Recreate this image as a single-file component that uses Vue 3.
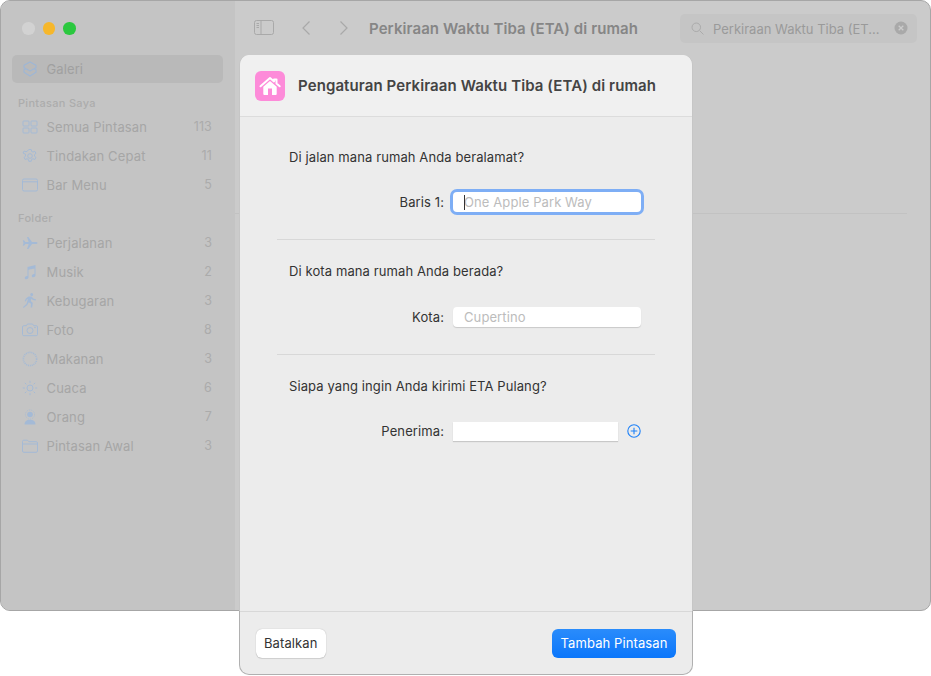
<script setup>
const mine = [
  { name: 'Semua Pintasan', count: 113, icon: 'grid' },
  { name: 'Tindakan Cepat', count: 11, icon: 'gear' },
  { name: 'Bar Menu', count: 5, icon: 'menu' },
]
const folders = [
  { name: 'Perjalanan', count: 3, icon: 'plane' },
  { name: 'Musik', count: 2, icon: 'music' },
  { name: 'Kebugaran', count: 3, icon: 'run' },
  { name: 'Foto', count: 8, icon: 'camera' },
  { name: 'Makanan', count: 3, icon: 'food' },
  { name: 'Cuaca', count: 6, icon: 'sun' },
  { name: 'Orang', count: 7, icon: 'person' },
  { name: 'Pintasan Awal', count: 3, icon: 'folder' },
]
const groups = [
  { title: 'Pintasan Saya', items: mine },
  { title: 'Folder', items: folders },
]
</script>

<template>
  <div class="stage">
    <div class="window">
      <aside class="sidebar">
        <div class="lights">
          <span class="light grey"></span>
          <span class="light amber"></span>
          <span class="light green"></span>
        </div>
        <div class="gallery">
          <svg class="ico" viewBox="0 0 16 16" fill="none" stroke="currentColor" stroke-width="1.100">
            <path d="M8 1 14 4.200v2.600L8 10 2 6.800V4.200Z" stroke-linejoin="round" />
            <path d="M3.500 7.700 2 9v2.300L8 15l6-3.700V9l-1.500-1.300" stroke-linejoin="round" />
          </svg>
          <span>Galeri</span>
        </div>
        <section v-for="g in groups" :key="g.title" class="group">
          <h3>{{ g.title }}</h3>
          <div v-for="it in g.items" :key="it.name" class="row">
            <svg class="ico" viewBox="0 0 16 16" fill="none" stroke="currentColor" stroke-width="1">
              <template v-if="it.icon === 'grid'">
                <rect x="1" y="2" width="6" height="5" rx=".8" /><rect x="9" y="2" width="6" height="5" rx=".8" />
                <rect x="1" y="9" width="6" height="5" rx=".8" /><rect x="9" y="9" width="6" height="5" rx=".8" />
              </template>
              <template v-else-if="it.icon === 'gear'">
                <circle cx="8" cy="8" r="2.300" />
                <path d="M6.800 1.500h2.400l.4 1.900 1.400.7 1.800-.8 1.200 2-1.500 1.300v1.600l1.500 1.300-1.200 2-1.800-.8-1.400.7-.4 1.900H6.800l-.4-1.900-1.400-.7-1.800.8-1.200-2 1.500-1.300V6.300L1 5l1.200-2 1.800.8 1.400-.7Z" stroke-linejoin="round" />
              </template>
              <template v-else-if="it.icon === 'menu'">
                <rect x=".5" y="2" width="15" height="12" rx="1.500" /><path d="M.5 4.800h15" />
              </template>
              <path v-else-if="it.icon === 'plane'" fill="currentColor" stroke="none" d="M15.500 8c0 .7-1 1-2 1H10l-3.600 5H5l1.700-5H3.400L2 10.700H.8L1.500 8 .8 5.300H2L3.400 7h3.300L5 2h1.400L10 7h3.500c1 0 2 .3 2 1Z" />
              <path v-else-if="it.icon === 'music'" fill="currentColor" stroke="none" d="M13.500 1v10.300c0 1.200-1 2-2.200 2-.9 0-1.500-.5-1.500-1.300 0-1 .8-1.600 2-1.900l.7-.2V4.600L6.500 5.800v7.500c0 1.200-1 2-2.200 2-.9 0-1.500-.5-1.500-1.300 0-1 .8-1.600 2-1.900l.7-.2V3Z" />
              <path v-else-if="it.icon === 'run'" fill="currentColor" stroke="none" d="M9.700 0a1.500 1.500 0 1 1 0 3 1.500 1.500 0 0 1 0-3ZM6.500 3.600l3-.2 2.200 2.400 2.300.4-.2 1.200-3-.5-1.300-1.300-.8 2.500 2.100 1.800-.6 4.600H8.700l.3-3.800-2.200-1.500-1.300 2.600-3.800 3.300-.7-1 3.400-3 1.600-5-1.300.5-.9 2-1.100-.5 1.200-2.700Z" />
              <template v-else-if="it.icon === 'camera'">
                <path d="M.5 5c0-.8.500-1.300 1.300-1.300h2.500L5.500 2h5l1.200 1.700h2.500c.8 0 1.300.5 1.300 1.300v7.500c0 .8-.5 1.200-1.300 1.200H1.800c-.8 0-1.300-.4-1.300-1.200Z" />
                <circle cx="8" cy="8.500" r="3" /><circle cx="13" cy="5.500" r=".4" />
              </template>
              <circle v-else-if="it.icon === 'food'" cx="8" cy="8" r="6.600" stroke-width="1.600" stroke-dasharray="1 .9" />
              <template v-else-if="it.icon === 'sun'">
                <circle cx="8" cy="8" r="3" />
                <path d="M8 .8v2M8 13.200v2M.8 8h2M13.200 8h2M2.900 2.900l1.400 1.400M11.700 11.700l1.400 1.400M13.100 2.900l-1.400 1.400M4.300 11.700l-1.400 1.400" />
              </template>
              <template v-else-if="it.icon === 'person'">
                <circle cx="8" cy="5.500" r="2.800" fill="currentColor" stroke="none" />
                <circle cx="8" cy="5.500" r="4.600" stroke-width=".8" stroke-dasharray="1 1" />
                <path fill="currentColor" stroke="none" d="M2.500 15.500c0-3 2-4.800 5.500-4.800s5.500 1.800 5.500 4.800Z" />
              </template>
              <path v-else d="M.5 3.500c0-.8.500-1.300 1.300-1.300h3.700l1.400 1.500h7.300c.8 0 1.300.5 1.300 1.300v8c0 .8-.5 1.300-1.300 1.300H1.800c-.8 0-1.300-.5-1.300-1.300ZM.5 6h15" stroke-linejoin="round" />
            </svg>
            <span class="label">{{ it.name }}</span>
            <span class="count">{{ it.count }}</span>
          </div>
        </section>
      </aside>
      <main class="main">
        <header class="toolbar">
          <svg class="panel-icon" viewBox="0 0 20 16" fill="none" stroke="currentColor" stroke-width="1">
            <rect x=".5" y=".5" width="19" height="14" rx="2" /><path d="M7 .5v14M2.500 3.500h2.500M2.500 5.500h2.500M2.500 7.500h2.500" />
          </svg>
          <svg class="chev" viewBox="0 0 10 16" fill="none" stroke="currentColor" stroke-width="1.200"><path d="M8.500 1.500 2 8l6.500 6.500" /></svg>
          <svg class="chev next" viewBox="0 0 10 16" fill="none" stroke="currentColor" stroke-width="1.200"><path d="M1.500 1.500 8 8l-6.500 6.500" /></svg>
          <h1>Perkiraan Waktu Tiba (ETA) di rumah</h1>
          <div class="search">
            <svg class="glass" viewBox="0 0 14 14" fill="none" stroke="currentColor" stroke-width="1"><circle cx="5.700" cy="5.700" r="4.600" /><path d="m9.200 9.200 4.200 4.200" /></svg>
            <span class="query">Perkiraan Waktu Tiba (ET...</span>
            <svg class="clear" viewBox="0 0 14 14"><circle cx="7" cy="7" r="6.500" fill="#a9a9a9" /><path d="m4.700 4.700 4.600 4.600m0-4.600-4.600 4.600" stroke="#cbcbcb" stroke-width="1.300" /></svg>
          </div>
        </header>
        <div class="content"><div class="rule"></div></div>
      </main>
    </div>

    <div class="dialog">
      <header class="dlg-head">
        <div class="app-icon">
          <svg viewBox="0 0 30 30" width="30" height="30">
            <path d="M5.500 15.300 15 7l4 3.400V8.500h2.500v4l3.200 2.800" fill="none" stroke="#fff" stroke-width="2" stroke-linecap="round" stroke-linejoin="round" />
            <path fill-rule="evenodd" fill="#fff" d="M8.300 15.800 15 10l6.700 5.800V23a1 1 0 0 1-1 1H9.300a1 1 0 0 1-1-1ZM13 17.500V24h4v-6.500Z" />
          </svg>
        </div>
        <h2>Pengaturan Perkiraan Waktu Tiba (ETA) di rumah</h2>
      </header>
      <div class="dlg-body">
        <section class="q first">
          <p>Di jalan mana rumah Anda beralamat?</p>
          <div class="field-row">
            <label>Baris 1:</label>
            <div class="input focus"><span class="caret"></span>One Apple Park Way</div>
          </div>
        </section>
        <section class="q second">
          <p>Di kota mana rumah Anda berada?</p>
          <div class="field-row">
            <label>Kota:</label>
            <div class="input">Cupertino</div>
          </div>
        </section>
        <section class="q last">
          <p>Siapa yang ingin Anda kirimi ETA Pulang?</p>
          <div class="field-row">
            <label>Penerima:</label>
            <div class="input square"></div>
            <svg class="plus" viewBox="0 0 14 14" fill="none" stroke="#1f82f8" stroke-width="1.100"><circle cx="7" cy="7" r="6.200" /><path d="M7 3.700v6.600M3.700 7h6.600" /></svg>
          </div>
        </section>
      </div>
      <footer class="dlg-foot">
        <button class="btn">Batalkan</button>
        <button class="btn primary">Tambah Pintasan</button>
      </footer>
    </div>
  </div>
</template>

<style scoped>
.stage {
  position: relative;
  width: 931px;
  height: 676px;
  overflow: hidden;
  background: #fff;
  font-family: Inter, "Liberation Sans", sans-serif;
  font-size: 13px;
  letter-spacing: 0.1px;
  color: #333;
}
.window {
  display: flex;
  height: 611px;
  box-sizing: border-box;
  border: 1px solid #a6a6a6;
  border-radius: 10px;
  overflow: hidden;
  background: #cbcbcb;
}
.sidebar {
  width: 234px;
  flex: none;
  box-sizing: border-box;
  padding: 0 12px 0 11px;
  background: #c4c4c4;
  color: #a6a6a6;
}
.lights {
  display: flex;
  gap: 8px;
  padding: 21px 0 0 10px;
  height: 33px;
}
.light { width: 12.500px; height: 12.500px; border-radius: 50%; }
.grey { background: #d2d2d2; }
.amber { background: #f6b72b; }
.green { background: #2bc83f; }
.gallery {
  display: flex;
  align-items: center;
  height: 28px;
  padding-left: 10px;
  border-radius: 5px;
  background: #b9b9b9;
  color: #a0a0a0;
}
.ico {
  width: 16px;
  height: 16px;
  flex: none;
  margin-right: 8.500px;
  color: #a4bad6;
}
.gallery .ico { color: #9db6d6; }
.group { margin-top: 12px; }
.group + .group { margin-top: 11px; }
h3 {
  margin: 0 0 1px;
  padding-left: 6px;
  font-size: 11px;
  font-weight: 500;
  letter-spacing: 0.3px;
  line-height: 16px;
  color: #acacac;
}
.group + .group h3 { margin-bottom: 2px; }
.row {
  display: flex;
  align-items: center;
  height: 29px;
  padding: 0 11px 0 10px;
  letter-spacing: 0.15px;
}
.label { flex: 1; }
.count { font-size: 12.500px; color: #ababab; }
.main {
  flex: 1;
  display: flex;
  flex-direction: column;
}
.toolbar {
  display: flex;
  align-items: center;
  height: 54px;
  padding: 0 13px 0 19px;
  color: #a9a9a9;
}
.panel-icon { width: 20px; height: 16px; flex: none; }
.chev { width: 10px; height: 16px; flex: none; margin-left: 27px; }
.chev.next { margin-left: 28px; }
h1 {
  flex: 1;
  margin: 0 0 0 20px;
  font-size: 15px;
  font-weight: 600;
  letter-spacing: 0.09px;
  color: #868686;
  white-space: nowrap;
}
.search {
  display: flex;
  align-items: center;
  width: 237px;
  height: 29px;
  box-sizing: border-box;
  padding: 0 9px 0 11px;
  border-radius: 5px;
  background: #c5c5c5;
}
.glass { width: 13px; height: 13px; flex: none; }
.query { flex: 1; margin-left: 9px; color: #9a9a9a; white-space: nowrap; letter-spacing: 0; padding-top: 2px; }
.clear { width: 14px; height: 14px; flex: none; }
.content { flex: 1; padding: 158px 23px 0 0; }
.rule { height: 1px; background: #c2c2c2; }

.dialog {
  position: absolute;
  left: 239px;
  top: 55px;
  width: 454px;
  height: 620px;
  box-sizing: border-box;
  display: flex;
  flex-direction: column;
  border: 1px solid transparent;
  border-top: 0;
  border-radius: 10px;
  background: linear-gradient(#ececec, #ececec) padding-box, linear-gradient(#c6c6c6 556px, #b0b0b0 556px) border-box;
  overflow: hidden;
}
.dlg-head {
  display: flex;
  align-items: center;
  height: 62px;
  flex: none;
  box-sizing: border-box;
  padding: 0 0 0 15px;
  background: #f0f0f0;
  border-bottom: 1px solid #dcdcdc;
}
.app-icon {
  width: 30px;
  height: 30px;
  border-radius: 6px;
  background: #fd8bd9;
  margin-right: 13px;
}
.app-icon svg { display: block; }
h2 {
  margin: 0;
  font-size: 15px;
  font-weight: 600;
  letter-spacing: 0.1px;
  color: #444;
  white-space: nowrap;
}
.dlg-body { flex: 1; padding: 0 37px; }
.q {
  height: 115px;
  box-sizing: border-box;
  padding: 23px 0 0 12px;
  border-bottom: 1px solid #d8d8d8;
}
.q.first { height: 123px; padding-top: 32px; }
.q.second .field-row { margin-top: 27px; }
.q.last { border-bottom: 0; }
.q p { margin: 0; line-height: 16px; }
.field-row {
  display: flex;
  align-items: center;
  margin-top: 26px;
  height: 22px;
}
.field-row label { width: 155px; text-align: right; flex: none; white-space: nowrap; }
.input {
  position: relative;
  width: 188px;
  height: 20px;
  box-sizing: border-box;
  margin-left: 9px;
  padding-left: 11px;
  line-height: 20px;
  border-radius: 4px;
  background: #fff;
  color: #bcbcbc;
  box-shadow: 0 1px 1px rgba(0, 0, 0, 0.15);
  white-space: nowrap;
}
.input.focus { box-shadow: 0 0 0 3px #7eaef5; }
.input.square { width: 165px; height: 19px; border-radius: 0; }
.caret {
  position: absolute;
  left: 11px;
  top: 3px;
  width: 1px;
  height: 15px;
  background: #333;
}
.plus { width: 14px; height: 14px; margin-left: 9px; flex: none; }
.dlg-foot {
  display: flex;
  align-items: center;
  justify-content: space-between;
  flex: none;
  height: 63px;
  box-sizing: border-box;
  padding: 0 16px;
  border-top: 1px solid #d8d8d8;
}
.btn {
  height: 29px;
  padding: 0 8px;
  border: 0;
  border-radius: 6px;
  background: #fff;
  font: inherit;
  letter-spacing: inherit;
  color: #333;
  box-shadow: 0 0 1px rgba(0, 0, 0, 0.3), 0 1px 1px rgba(0, 0, 0, 0.1);
}
.primary {
  padding: 0 8.500px;
  background: linear-gradient(#2a8cfb, #0a76fb);
  color: #fff;
  box-shadow: none;
}
</style>
